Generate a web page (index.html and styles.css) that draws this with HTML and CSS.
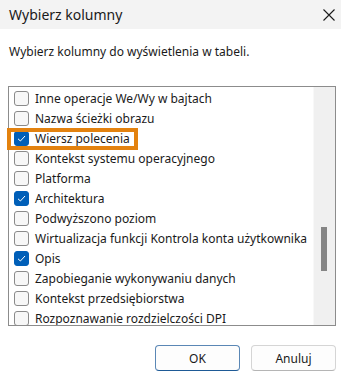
FILE: index.html
```html
<!DOCTYPE html>
<html lang="pl">

<head>
    <meta charset="UTF-8">
    <title>Wybierz kolumny</title>
    <link rel="stylesheet" href="styles.css">
</head>

<body>
    <div id="dialog">
        <div class="titlebar">
            <span class="title">Wybierz kolumny</span>
            <svg class="close" width="12" height="12" viewBox="0 0 12 12">
                <path d="M0.5 0.5 L11.5 11.5 M11.5 0.5 L0.5 11.5" stroke="#1a1a1a" stroke-width="1.1" fill="none"/>
            </svg>
        </div>
        <p class="desc">Wybierz kolumny do wyświetlenia w tabeli.</p>
        <div class="listbox">
            <ul class="list">
                <li><span class="box"></span>Inne operacje We/Wy w bajtach</li>
                <li><span class="box"></span>Nazwa ścieżki obrazu</li>
                <li><span class="box checked"></span>Wiersz polecenia</li>
                <li><span class="box"></span>Kontekst systemu operacyjnego</li>
                <li><span class="box"></span>Platforma</li>
                <li><span class="box checked"></span>Architektura</li>
                <li><span class="box"></span>Podwyższono poziom</li>
                <li><span class="box"></span>Wirtualizacja funkcji Kontrola konta użytkownika</li>
                <li><span class="box checked"></span>Opis</li>
                <li><span class="box"></span>Zapobieganie wykonywaniu danych</li>
                <li><span class="box"></span>Kontekst przedsiębiorstwa</li>
                <li><span class="box"></span>Rozpoznawanie rozdzielczości DPI</li>
            </ul>
            <div class="scrollbar">
                <div class="thumb"></div>
            </div>
        </div>
        <div class="buttons">
            <button class="btn default">OK</button>
            <button class="btn">Anuluj</button>
        </div>
        <div class="highlight"></div>
    </div>
</body>

</html>
```

FILE: styles.css
```css
body {
    margin: 0;
    background: #fff;
    font-family: "Noto Sans", "Open Sans", sans-serif;
    color: #1a1a1a;
}

#dialog {
    width: 341px;
    height: 380px;
    position: relative;
    overflow: hidden;
}

.titlebar {
    height: 29px;
    background: #f3f3f3;
    display: flex;
    align-items: center;
    justify-content: space-between;
    padding: 0 6px 0 9px;
}

.title {
    font-size: 14px;
}

.desc {
    margin: 0;
    padding: 14px 9px 0;
    height: 43px;
    font-size: 12px;
    line-height: 18px;
}

.listbox {
    margin: 0 5px 0 8px;
    height: 240px;
    box-sizing: border-box;
    border: 1px solid #8c8c8c;
    display: flex;
    overflow: hidden;
}

.list {
    flex: 1;
    min-width: 0;
    overflow: hidden;
    list-style: none;
    margin: 0;
    padding: 1px 0 0;
}

.list li {
    height: 20px;
    display: flex;
    align-items: center;
    font-size: 12px;
    white-space: nowrap;
}

.box {
    width: 15px;
    height: 15px;
    box-sizing: border-box;
    margin: 0 6px 0 5px;
    border: 1px solid #8a8a8a;
    border-radius: 3px;
    background: #f7f7f7;
    flex: none;
}

.box.checked {
    border-color: #005fb8;
    background: #005fb8 url("data:image/svg+xml,%3Csvg xmlns='http://www.w3.org/2000/svg' width='13' height='13' viewBox='0 0 13 13'%3E%3Cpath d='M3 6.8 L5.4 9 L10 4' stroke='white' stroke-width='1' fill='none'/%3E%3C/svg%3E") center no-repeat;
}

.scrollbar {
    width: 21px;
    background: #f0f0f0;
    border-left: 1px solid #f8f8f8;
    flex: none;
}

.thumb {
    width: 6px;
    height: 44px;
    margin: 140px 0 0 7px;
    background: #858585;
}

.buttons {
    display: flex;
    justify-content: flex-end;
    gap: 11px;
    padding: 19px 5px 0 0;
}

.btn {
    width: 85px;
    height: 26px;
    font-family: inherit;
    font-size: 12px;
    color: #1a1a1a;
    background: #fdfdfd;
    border: 1px solid #d5d5d5;
    border-bottom-color: #b5b5b5;
    border-radius: 4px;
}

.btn.default {
    border-color: #5a87b5;
    border-bottom-color: #1e5a96;
}

.highlight {
    position: absolute;
    left: 7px;
    top: 128px;
    width: 131px;
    height: 22px;
    box-sizing: border-box;
    border: 4px solid #e3820f;
}
```
